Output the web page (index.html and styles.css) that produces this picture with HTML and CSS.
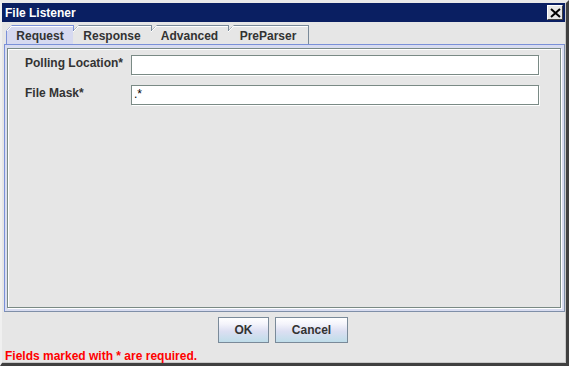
FILE: index.html
```html
<!DOCTYPE html>
<html>
<head>
<meta charset="utf-8">
<link rel="stylesheet" href="styles.css">
</head>
<body>
<div class="win">
  <div class="titlebar">
    <span class="title">File Listener</span>
    <span class="close"><svg width="11" height="10" viewBox="0 0 11 10"><path d="M1 1 L10 9 M10 1 L1 9" stroke="#000" stroke-width="2" fill="none"/></svg></span>
  </div>
  <div class="tabs">
    <div class="tab sel t1">Request</div>
    <div class="tab t2">Response</div>
    <div class="tab t3">Advanced</div>
    <div class="tab t4">PreParser</div>
  </div>
  <div class="panel">
    <div class="inner">
      <div class="row">
        <label class="lbl">Polling Location*</label>
        <div class="field"></div>
      </div>
      <div class="row">
        <label class="lbl">File Mask*</label>
        <div class="field">.*</div>
      </div>
    </div>
  </div>
  <div class="buttons">
    <button class="btn ok">OK</button>
    <button class="btn cancel">Cancel</button>
  </div>
  <div class="req">Fields marked with * are required.</div>
</div>
</body>
</html>
```
FILE: styles.css
```css
html, body { margin: 0; padding: 0; background: #e6e6e6; }
body { font-family: "Liberation Sans", Arial, sans-serif; font-size: 12px; color: #333; }
.win {
  width: 569px; height: 366px; box-sizing: border-box;
  background: #e6e6e6;
  border-top: 3px solid #e9e9e9;
  border-left: 2px solid #f0f0f0;
  border-right: 3px solid #404040;
  border-bottom: 3px solid #404040;
  box-shadow: inset -1px -1px 0 #c8c8c8;
  display: flex; flex-direction: column;
}
.titlebar {
  height: 19px; background: #0a1f62; color: #fff;
  display: flex; align-items: center; justify-content: space-between;
  padding: 0 2px 0 3px; margin-right: 1px;
}
.title { font-weight: bold; font-size: 12px; }
.close {
  width: 14px; height: 13px; background: #e6e6e6;
  border: 1px solid; border-color: #fff #404040 #404040 #fff;
  display: flex; align-items: center; justify-content: center;
}
.tabs { display: flex; margin-top: 3px; padding-left: 4px; height: 19px; }
.tab {
  box-sizing: border-box; height: 19px; text-align: center; font-weight: bold;
  line-height: 18px; padding-top: 1px;
  border-top: 1px solid #7a8a99; border-right: 1px solid #7a8a99;
  background-origin: border-box;
  background-image: linear-gradient(135deg, transparent 3.4px, #7a8a99 3.4px, #7a8a99 4.4px, #fff 4.4px, #fff 5.2px, #e6e6e6 5.2px);
  clip-path: polygon(6px 0, 100% 0, 100% 100%, 0 100%, 0 6px);
  box-shadow: inset 0 1px 0 #fff;
  margin-left: -1px;
}
.tab.sel {
  border-color: #7a90d8;
  background-image: linear-gradient(135deg, transparent 3.4px, #7a90d8 3.4px, #7a90d8 4.4px, #fff 4.4px, #fff 5.2px, #d6d9f0 5.2px);
  border-left: 1px solid #7a90d8;
  margin-left: 0;
}
.t1 { width: 68px; }
.t2 { width: 79px; }
.t3 { width: 78px; }
.t4 { width: 81px; }
.panel {
  height: 268px; box-sizing: border-box;
  margin: 0 1px 0 2px;
  border: 1px solid #7a90d8; border-bottom-color: #7f8fa8; border-right-color: #7f8fa8;
  background: #d8dcf0; padding: 3px 3px 3px 2px;
}
.inner {
  height: 100%; box-sizing: border-box;
  border: 1px solid #7a8a85;
  box-shadow: inset 1px 1px 0 #fff, 1px 1px 0 #fff;
  background: #e6e6e6;
  padding: 6px 0 0 17px;
  display: flex; flex-direction: column; gap: 10px;
}
.row { display: flex; align-items: center; height: 20px; }
.lbl { width: 106px; font-weight: bold; position: relative; top: -2px; }
.field {
  width: 408px; height: 20px; box-sizing: border-box;
  background: #fff; border: 1px solid #7a8a85;
  box-shadow: 1px 1px 0 #fff;
  font-size: 12px; color: #000; padding-left: 2px; line-height: 17px;
}
.buttons { display: flex; justify-content: center; gap: 6px; margin-top: 5px; padding-right: 2px; }
.btn {
  height: 26px; box-sizing: border-box; margin: 0;
  font-family: "Liberation Sans", Arial, sans-serif; font-weight: bold; font-size: 12px; color: #333;
  border: 1px solid #7a8a99;
  background: linear-gradient(to bottom, #ffffff 0%, #f4f4fb 25%, #dcdff2 55%, #bfdde9 100%);
  padding: 0;
}
.ok { width: 51px; }
.cancel { width: 73px; }
.req { color: #ff0000; font-weight: bold; font-size: 12px; margin-top: 6px; padding-left: 3px; }
```
